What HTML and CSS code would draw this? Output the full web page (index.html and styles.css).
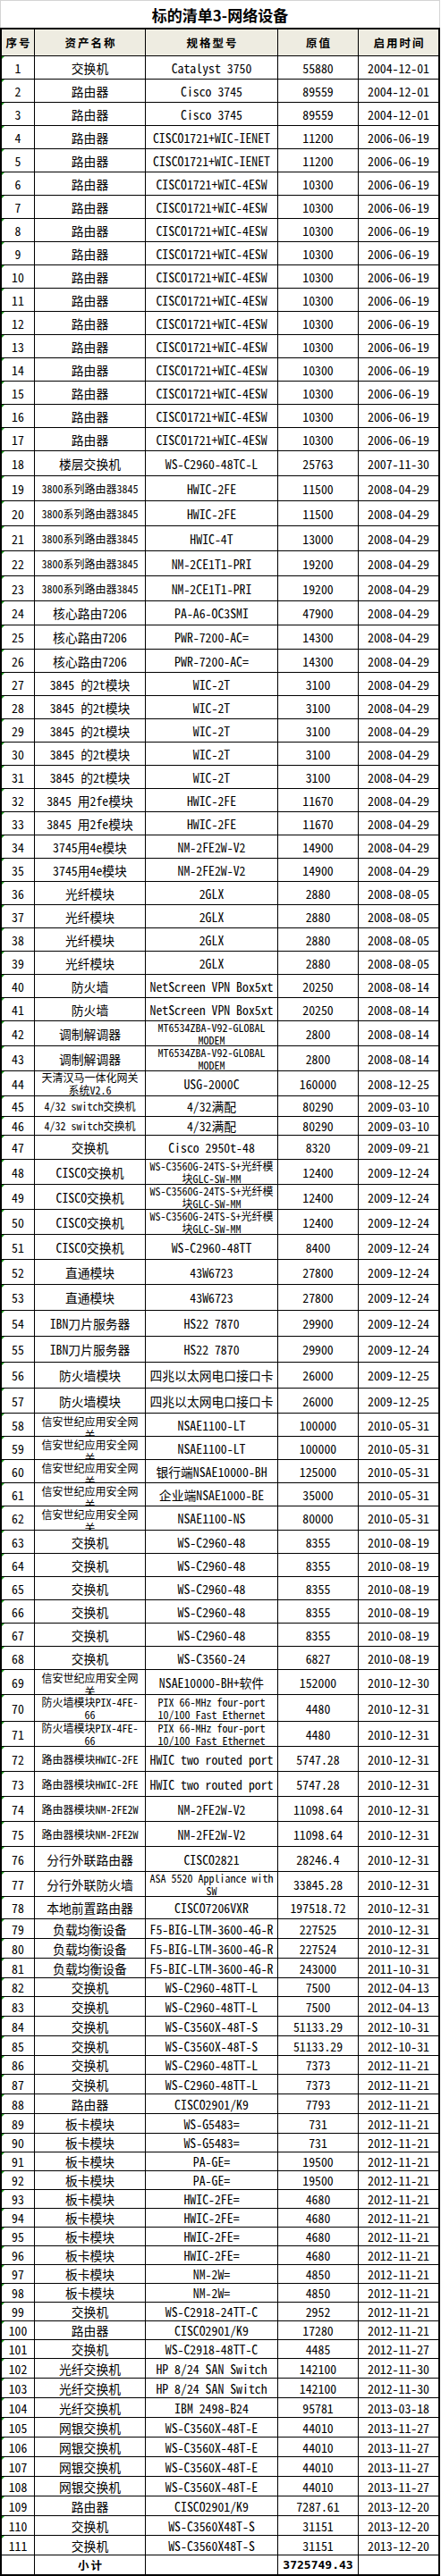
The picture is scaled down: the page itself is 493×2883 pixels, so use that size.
FILE: index.html
```html
<!DOCTYPE html>
<html lang="zh-CN">
<head>
<meta charset="utf-8">
<title>标的清单3-网络设备</title>
<link rel="stylesheet" href="styles.css">
</head>
<body>
<div class="sheet">
  <div class="title">标的清单3-网络设备</div>
  <div class="tbl">
    <div class="r hd"><div>序号</div><div>资产名称</div><div>规格型号</div><div>原值</div><div>启用时间</div></div>
    <div class="r d h26"><div>1</div><div>交换机</div><div>Catalyst 3750</div><div>55880</div><div>2004-12-01</div></div>
    <div class="r d h26"><div>2</div><div>路由器</div><div>Cisco 3745</div><div>89559</div><div>2004-12-01</div></div>
    <div class="r d h26"><div>3</div><div>路由器</div><div>Cisco 3745</div><div>89559</div><div>2004-12-01</div></div>
    <div class="r d h26"><div>4</div><div>路由器</div><div>CISCO1721+WIC-IENET</div><div>11200</div><div>2006-06-19</div></div>
    <div class="r d h26"><div>5</div><div>路由器</div><div>CISCO1721+WIC-IENET</div><div>11200</div><div>2006-06-19</div></div>
    <div class="r d h26"><div>6</div><div>路由器</div><div>CISCO1721+WIC-4ESW</div><div>10300</div><div>2006-06-19</div></div>
    <div class="r d h26"><div>7</div><div>路由器</div><div>CISCO1721+WIC-4ESW</div><div>10300</div><div>2006-06-19</div></div>
    <div class="r d h26"><div>8</div><div>路由器</div><div>CISCO1721+WIC-4ESW</div><div>10300</div><div>2006-06-19</div></div>
    <div class="r d h26"><div>9</div><div>路由器</div><div>CISCO1721+WIC-4ESW</div><div>10300</div><div>2006-06-19</div></div>
    <div class="r d h26"><div>10</div><div>路由器</div><div>CISCO1721+WIC-4ESW</div><div>10300</div><div>2006-06-19</div></div>
    <div class="r d h26"><div>11</div><div>路由器</div><div>CISCO1721+WIC-4ESW</div><div>10300</div><div>2006-06-19</div></div>
    <div class="r d h26"><div>12</div><div>路由器</div><div>CISCO1721+WIC-4ESW</div><div>10300</div><div>2006-06-19</div></div>
    <div class="r d h26"><div>13</div><div>路由器</div><div>CISCO1721+WIC-4ESW</div><div>10300</div><div>2006-06-19</div></div>
    <div class="r d h26"><div>14</div><div>路由器</div><div>CISCO1721+WIC-4ESW</div><div>10300</div><div>2006-06-19</div></div>
    <div class="r d h26"><div>15</div><div>路由器</div><div>CISCO1721+WIC-4ESW</div><div>10300</div><div>2006-06-19</div></div>
    <div class="r d h26"><div>16</div><div>路由器</div><div>CISCO1721+WIC-4ESW</div><div>10300</div><div>2006-06-19</div></div>
    <div class="r d h26"><div>17</div><div>路由器</div><div>CISCO1721+WIC-4ESW</div><div>10300</div><div>2006-06-19</div></div>
    <div class="r d h28"><div>18</div><div>楼层交换机</div><div>WS-C2960-48TC-L</div><div>25763</div><div>2007-11-30</div></div>
    <div class="r d h28"><div>19</div><div class="s">3800系列路由器3845</div><div>HWIC-2FE</div><div>11500</div><div>2008-04-29</div></div>
    <div class="r d h28"><div>20</div><div class="s">3800系列路由器3845</div><div>HWIC-2FE</div><div>11500</div><div>2008-04-29</div></div>
    <div class="r d h28"><div>21</div><div class="s">3800系列路由器3845</div><div>HWIC-4T</div><div>13000</div><div>2008-04-29</div></div>
    <div class="r d h28"><div>22</div><div class="s">3800系列路由器3845</div><div>NM-2CE1T1-PRI</div><div>19200</div><div>2008-04-29</div></div>
    <div class="r d h28"><div>23</div><div class="s">3800系列路由器3845</div><div>NM-2CE1T1-PRI</div><div>19200</div><div>2008-04-29</div></div>
    <div class="r d h27"><div>24</div><div>核心路由7206</div><div>PA-A6-OC3SMI</div><div>47900</div><div>2008-04-29</div></div>
    <div class="r d h27"><div>25</div><div>核心路由7206</div><div>PWR-7200-AC=</div><div>14300</div><div>2008-04-29</div></div>
    <div class="r d h26"><div>26</div><div>核心路由7206</div><div>PWR-7200-AC=</div><div>14300</div><div>2008-04-29</div></div>
    <div class="r d h26"><div>27</div><div>3845 的2t模块</div><div>WIC-2T</div><div>3100</div><div>2008-04-29</div></div>
    <div class="r d h26"><div>28</div><div>3845 的2t模块</div><div>WIC-2T</div><div>3100</div><div>2008-04-29</div></div>
    <div class="r d h26"><div>29</div><div>3845 的2t模块</div><div>WIC-2T</div><div>3100</div><div>2008-04-29</div></div>
    <div class="r d h26"><div>30</div><div>3845 的2t模块</div><div>WIC-2T</div><div>3100</div><div>2008-04-29</div></div>
    <div class="r d h26"><div>31</div><div>3845 的2t模块</div><div>WIC-2T</div><div>3100</div><div>2008-04-29</div></div>
    <div class="r d h26"><div>32</div><div>3845 用2fe模块</div><div>HWIC-2FE</div><div>11670</div><div>2008-04-29</div></div>
    <div class="r d h26"><div>33</div><div>3845 用2fe模块</div><div>HWIC-2FE</div><div>11670</div><div>2008-04-29</div></div>
    <div class="r d h26"><div>34</div><div>3745用4e模块</div><div>NM-2FE2W-V2</div><div>14900</div><div>2008-04-29</div></div>
    <div class="r d h26"><div>35</div><div>3745用4e模块</div><div>NM-2FE2W-V2</div><div>14900</div><div>2008-04-29</div></div>
    <div class="r d h26"><div>36</div><div>光纤模块</div><div>2GLX</div><div>2880</div><div>2008-08-05</div></div>
    <div class="r d h26"><div>37</div><div>光纤模块</div><div>2GLX</div><div>2880</div><div>2008-08-05</div></div>
    <div class="r d h26"><div>38</div><div>光纤模块</div><div>2GLX</div><div>2880</div><div>2008-08-05</div></div>
    <div class="r d h26"><div>39</div><div>光纤模块</div><div>2GLX</div><div>2880</div><div>2008-08-05</div></div>
    <div class="r d h26"><div>40</div><div>防火墙</div><div>NetScreen VPN Box5xt</div><div>20250</div><div>2008-08-14</div></div>
    <div class="r d h26"><div>41</div><div>防火墙</div><div>NetScreen VPN Box5xt</div><div>20250</div><div>2008-08-14</div></div>
    <div class="r d h28"><div>42</div><div>调制解调器</div><div class="s">MT6534ZBA-V92-GLOBAL<br>MODEM</div><div>2800</div><div>2008-08-14</div></div>
    <div class="r d h28"><div>43</div><div>调制解调器</div><div class="s">MT6534ZBA-V92-GLOBAL<br>MODEM</div><div>2800</div><div>2008-08-14</div></div>
    <div class="r d h28"><div>44</div><div class="s">天清汉马一体化网关<br>系统V2.6</div><div>USG-2000C</div><div>160000</div><div>2008-12-25</div></div>
    <div class="r d h23"><div>45</div><div class="s">4/32 switch交换机</div><div>4/32满配</div><div>80290</div><div>2009-03-10</div></div>
    <div class="r d h21"><div>46</div><div class="s">4/32 switch交换机</div><div>4/32满配</div><div>80290</div><div>2009-03-10</div></div>
    <div class="r d h27"><div>47</div><div>交换机</div><div>Cisco 2950t-48</div><div>8320</div><div>2009-09-21</div></div>
    <div class="r d h28"><div>48</div><div>CISCO交换机</div><div class="s">WS-C3560G-24TS-S+光纤模<br>块GLC-SW-MM</div><div>12400</div><div>2009-12-24</div></div>
    <div class="r d h28"><div>49</div><div>CISCO交换机</div><div class="s">WS-C3560G-24TS-S+光纤模<br>块GLC-SW-MM</div><div>12400</div><div>2009-12-24</div></div>
    <div class="r d h28"><div>50</div><div>CISCO交换机</div><div class="s">WS-C3560G-24TS-S+光纤模<br>块GLC-SW-MM</div><div>12400</div><div>2009-12-24</div></div>
    <div class="r d h28"><div>51</div><div>CISCO交换机</div><div>WS-C2960-48TT</div><div>8400</div><div>2009-12-24</div></div>
    <div class="r d h28"><div>52</div><div>直通模块</div><div>43W6723</div><div>27800</div><div>2009-12-24</div></div>
    <div class="r d h29"><div>53</div><div>直通模块</div><div>43W6723</div><div>27800</div><div>2009-12-24</div></div>
    <div class="r d h29"><div>54</div><div>IBN刀片服务器</div><div>HS22 7870</div><div>29900</div><div>2009-12-24</div></div>
    <div class="r d h29"><div>55</div><div>IBN刀片服务器</div><div>HS22 7870</div><div>29900</div><div>2009-12-24</div></div>
    <div class="r d h29"><div>56</div><div>防火墙模块</div><div>四兆以太网电口接口卡</div><div>26000</div><div>2009-12-25</div></div>
    <div class="r d h28"><div>57</div><div>防火墙模块</div><div>四兆以太网电口接口卡</div><div>26000</div><div>2009-12-25</div></div>
    <div class="r d h26"><div>58</div><div class="s clip">信安世纪应用安全网<br>关</div><div>NSAE1100-LT</div><div>100000</div><div>2010-05-31</div></div>
    <div class="r d h26"><div>59</div><div class="s clip">信安世纪应用安全网<br>关</div><div>NSAE1100-LT</div><div>100000</div><div>2010-05-31</div></div>
    <div class="r d h26"><div>60</div><div class="s clip">信安世纪应用安全网<br>关</div><div>银行端NSAE10000-BH</div><div>125000</div><div>2010-05-31</div></div>
    <div class="r d h26"><div>61</div><div class="s clip">信安世纪应用安全网<br>关</div><div>企业端NSAE1000-BE</div><div>35000</div><div>2010-05-31</div></div>
    <div class="r d h27"><div>62</div><div class="s clip">信安世纪应用安全网<br>关</div><div>NSAE1100-NS</div><div>80000</div><div>2010-05-31</div></div>
    <div class="r d h26"><div>63</div><div>交换机</div><div>WS-C2960-48</div><div>8355</div><div>2010-08-19</div></div>
    <div class="r d h26"><div>64</div><div>交换机</div><div>WS-C2960-48</div><div>8355</div><div>2010-08-19</div></div>
    <div class="r d h26"><div>65</div><div>交换机</div><div>WS-C2960-48</div><div>8355</div><div>2010-08-19</div></div>
    <div class="r d h26"><div>66</div><div>交换机</div><div>WS-C2960-48</div><div>8355</div><div>2010-08-19</div></div>
    <div class="r d h26"><div>67</div><div>交换机</div><div>WS-C2960-48</div><div>8355</div><div>2010-08-19</div></div>
    <div class="r d h26"><div>68</div><div>交换机</div><div>WS-C3560-24</div><div>6827</div><div>2010-08-19</div></div>
    <div class="r d h28"><div>69</div><div class="s clip">信安世纪应用安全网<br>关</div><div>NSAE10000-BH+软件</div><div>152000</div><div>2010-12-30</div></div>
    <div class="r d h30"><div>70</div><div class="s">防火墙模块PIX-4FE-<br>66</div><div class="s">PIX 66-MHz four-port<br>10/100 Fast Ethernet</div><div>4480</div><div>2010-12-31</div></div>
    <div class="r d h28"><div>71</div><div class="s">防火墙模块PIX-4FE-<br>66</div><div class="s">PIX 66-MHz four-port<br>10/100 Fast Ethernet</div><div>4480</div><div>2010-12-31</div></div>
    <div class="r d h28"><div>72</div><div class="s">路由器模块HWIC-2FE</div><div>HWIC two routed port</div><div>5747.28</div><div>2010-12-31</div></div>
    <div class="r d h28"><div>73</div><div class="s">路由器模块HWIC-2FE</div><div>HWIC two routed port</div><div>5747.28</div><div>2010-12-31</div></div>
    <div class="r d h28"><div>74</div><div class="s">路由器模块NM-2FE2W</div><div>NM-2FE2W-V2</div><div>11098.64</div><div>2010-12-31</div></div>
    <div class="r d h28"><div>75</div><div class="s">路由器模块NM-2FE2W</div><div>NM-2FE2W-V2</div><div>11098.64</div><div>2010-12-31</div></div>
    <div class="r d h28"><div>76</div><div>分行外联路由器</div><div>CISCO2821</div><div>28246.4</div><div>2010-12-31</div></div>
    <div class="r d h28"><div>77</div><div>分行外联防火墙</div><div class="s">ASA 5520 Appliance with<br>SW</div><div>33845.28</div><div>2010-12-31</div></div>
    <div class="r d h25"><div>78</div><div>本地前置路由器</div><div>CISCO7206VXR</div><div>197518.72</div><div>2010-12-31</div></div>
    <div class="r d h22"><div>79</div><div>负载均衡设备</div><div>F5-BIG-LTM-3600-4G-R</div><div>227525</div><div>2010-12-31</div></div>
    <div class="r d h22"><div>80</div><div>负载均衡设备</div><div>F5-BIG-LTM-3600-4G-R</div><div>227524</div><div>2010-12-31</div></div>
    <div class="r d h22"><div>81</div><div>负载均衡设备</div><div>F5-BIC-LTM-3600-4G-R</div><div>243000</div><div>2011-10-31</div></div>
    <div class="r d h21"><div>82</div><div>交换机</div><div>WS-C2960-48TT-L</div><div>7500</div><div>2012-04-13</div></div>
    <div class="r d h22"><div>83</div><div>交换机</div><div>WS-C2960-48TT-L</div><div>7500</div><div>2012-04-13</div></div>
    <div class="r d h22"><div>84</div><div>交换机</div><div>WS-C3560X-48T-S</div><div>51133.29</div><div>2012-10-31</div></div>
    <div class="r d h22"><div>85</div><div>交换机</div><div>WS-C3560X-48T-S</div><div>51133.29</div><div>2012-10-31</div></div>
    <div class="r d h21"><div>86</div><div>交换机</div><div>WS-C2960-48TT-L</div><div>7373</div><div>2012-11-21</div></div>
    <div class="r d h22"><div>87</div><div>交换机</div><div>WS-C2960-48TT-L</div><div>7373</div><div>2012-11-21</div></div>
    <div class="r d h22"><div>88</div><div>路由器</div><div>CISCO2901/K9</div><div>7793</div><div>2012-11-21</div></div>
    <div class="r d h22"><div>89</div><div>板卡模块</div><div>WS-G5483=</div><div>731</div><div>2012-11-21</div></div>
    <div class="r d h21"><div>90</div><div>板卡模块</div><div>WS-G5483=</div><div>731</div><div>2012-11-21</div></div>
    <div class="r d h21"><div>91</div><div>板卡模块</div><div>PA-GE=</div><div>19500</div><div>2012-11-21</div></div>
    <div class="r d h21"><div>92</div><div>板卡模块</div><div>PA-GE=</div><div>19500</div><div>2012-11-21</div></div>
    <div class="r d h21"><div>93</div><div>板卡模块</div><div>HWIC-2FE=</div><div>4680</div><div>2012-11-21</div></div>
    <div class="r d h21"><div>94</div><div>板卡模块</div><div>HWIC-2FE=</div><div>4680</div><div>2012-11-21</div></div>
    <div class="r d h21"><div>95</div><div>板卡模块</div><div>HWIC-2FE=</div><div>4680</div><div>2012-11-21</div></div>
    <div class="r d h21"><div>96</div><div>板卡模块</div><div>HWIC-2FE=</div><div>4680</div><div>2012-11-21</div></div>
    <div class="r d h21"><div>97</div><div>板卡模块</div><div>NM-2W=</div><div>4850</div><div>2012-11-21</div></div>
    <div class="r d h21"><div>98</div><div>板卡模块</div><div>NM-2W=</div><div>4850</div><div>2012-11-21</div></div>
    <div class="r d h21"><div>99</div><div>交换机</div><div>WS-C2918-24TT-C</div><div>2952</div><div>2012-11-21</div></div>
    <div class="r d h21"><div>100</div><div>路由器</div><div>CISCO2901/K9</div><div>17280</div><div>2012-11-21</div></div>
    <div class="r d h21"><div>101</div><div>交换机</div><div>WS-C2918-48TT-C</div><div>4485</div><div>2012-11-27</div></div>
    <div class="r d h22"><div>102</div><div>光纤交换机</div><div>HP 8/24 SAN Switch</div><div>142100</div><div>2012-11-30</div></div>
    <div class="r d h22"><div>103</div><div>光纤交换机</div><div>HP 8/24 SAN Switch</div><div>142100</div><div>2012-11-30</div></div>
    <div class="r d h22"><div>104</div><div>光纤交换机</div><div>IBM 2498-B24</div><div>95781</div><div>2013-03-18</div></div>
    <div class="r d h22"><div>105</div><div>网银交换机</div><div>WS-C3560X-48T-E</div><div>44010</div><div>2013-11-27</div></div>
    <div class="r d h22"><div>106</div><div>网银交换机</div><div>WS-C3560X-48T-E</div><div>44010</div><div>2013-11-27</div></div>
    <div class="r d h22"><div>107</div><div>网银交换机</div><div>WS-C3560X-48T-E</div><div>44010</div><div>2013-11-27</div></div>
    <div class="r d h22"><div>108</div><div>网银交换机</div><div>WS-C3560X-48T-E</div><div>44010</div><div>2013-11-27</div></div>
    <div class="r d h22"><div>109</div><div>路由器</div><div>CISCO2901/K9</div><div>7287.61</div><div>2013-12-20</div></div>
    <div class="r d h22"><div>110</div><div>交换机</div><div>WS-C3560X48T-S</div><div>31151</div><div>2013-12-20</div></div>
    <div class="r d h22"><div>111</div><div>交换机</div><div>WS-C3560X48T-S</div><div>31151</div><div>2013-12-20</div></div>
    <div class="r ft h21"><div></div><div class="lbl">小计</div><div></div><div class="tot">3725749.43</div><div></div></div>
  </div>
</div>
</body>
</html>
```

FILE: styles.css
```css
* { box-sizing: border-box; }

html, body {
  margin: 0;
  padding: 0;
  background: #ffffff;
}

body {
  width: 493px;
  color: #000;
  font-family: "Noto Sans Mono CJK SC", "Noto Sans CJK SC", sans-serif;
  font-size: 13.8px;
}

.sheet {
  width: 492px;
}

.title {
  height: 31px;
  border: 1px solid #d4d4d4;
  border-bottom: 0;
  display: flex;
  align-items: center;
  justify-content: center;
  padding-top: 2px;
  font-family: "Noto Sans CJK SC", sans-serif;
  font-weight: 700;
  font-size: 17px;
  line-height: 20px;
}

.tbl {
  width: 492px;
  border: 2px solid #000;
}

.r {
  display: grid;
  grid-template-columns: 37px 124px 148px 90px 89px;
  border-bottom: 1px solid #000;
}

.r > div {
  position: relative;
  border-right: 1px solid #000;
  display: flex;
  align-items: center;
  justify-content: center;
  text-align: center;
  overflow: hidden;
  white-space: nowrap;
  line-height: 16px;
}

.r > div:last-child { border-right: 0; }

.d > div:first-child::before {
  content: "";
  position: absolute;
  left: 0;
  top: 0;
  border-top: 3px solid #1f9a1f;
  border-right: 3px solid transparent;
}

.hd {
  height: 30px;
  background: #eeece1;
}

.hd > div {
  font-family: "Noto Sans CJK SC", sans-serif;
  font-weight: 700;
  font-size: 12.5px;
  letter-spacing: 2px;
  padding-left: 2px;
}

.ft { border-bottom: 0; }

.lbl {
  font-family: "Noto Sans CJK SC", sans-serif;
  font-weight: 700;
  font-size: 12.5px;
  letter-spacing: 2px;
  padding-left: 2px;
}

.tot {
  font-family: "DejaVu Sans Mono", monospace;
  font-weight: 700;
  font-size: 13px;
}

.r > div.s {
  font-size: 12px;
  line-height: 13.5px;
}

.r > div.clip {
  align-items: flex-start;
  padding-top: 1px;
  line-height: 15px;
}

.h21 { height: 21px; }
.h22 { height: 22px; }
.h23 { height: 23px; }
.h25 { height: 25px; }
.h26 { height: 26px; }
.h27 { height: 27px; }
.h28 { height: 28px; }
.h29 { height: 29px; }
.h30 { height: 30px; }
```
